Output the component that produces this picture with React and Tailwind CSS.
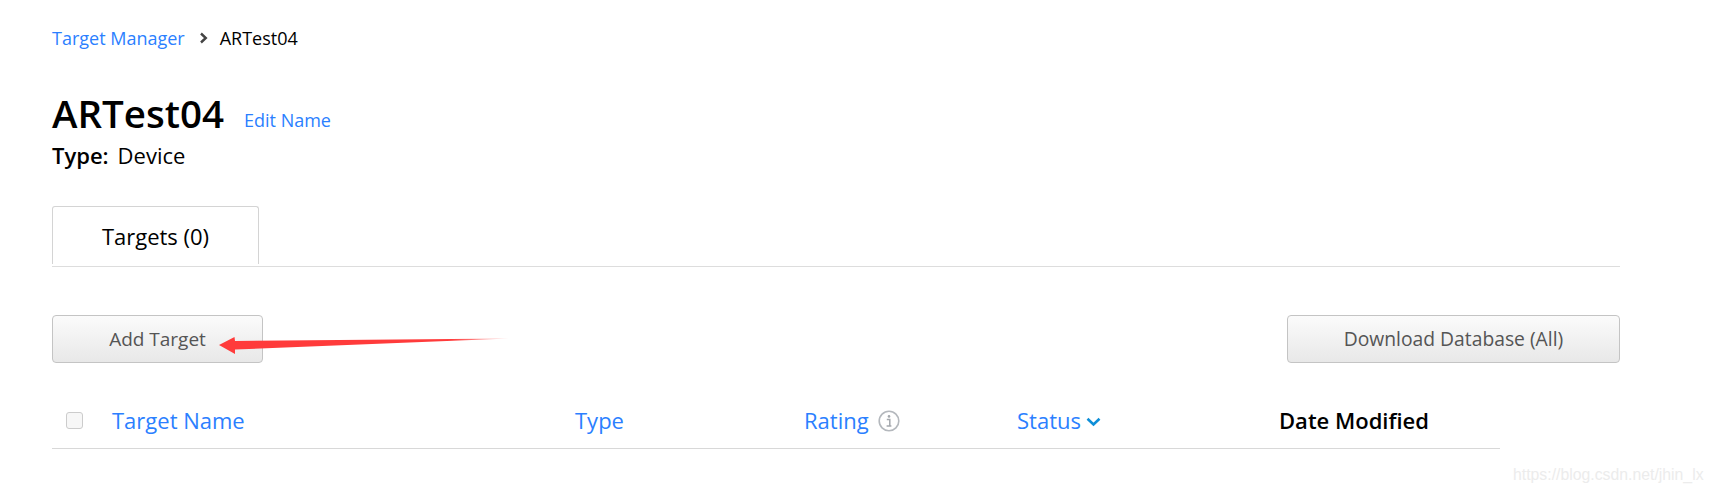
import React from "react";

const font = { fontFamily: '"Open Sans", sans-serif' };

function InfoIcon() {
  return (
    <svg width="22" height="22" viewBox="0 0 22 22" fill="none" className="ml-[9px]">
      <circle cx="11" cy="11" r="9.8" stroke="#b4b8bd" strokeWidth="1.6" />
      <circle cx="11" cy="6.4" r="1.3" fill="#a4a8ad" />
      <path d="M8.8 9.4h3v6.4M8.6 16h4.8" stroke="#a4a8ad" strokeWidth="1.5" />
    </svg>
  );
}

export default function App() {
  return (
    <div className="relative w-[1712px] h-[495px] bg-white overflow-hidden pl-[52px] pr-[92px]" style={font}>
      {/* Breadcrumb */}
      <div className="flex items-center h-[24px] mt-[26px] text-[18px] leading-[24px]">
        <a className="text-[#2b7fff]">Target Manager</a>
        <svg width="10" height="12" viewBox="0 0 10 12" className="ml-[14px] mr-[11px]">
          <path d="M2 1.5 6.8 6 2 10.5" fill="none" stroke="#444" strokeWidth="2.4" />
        </svg>
        <span className="text-black">ARTest04</span>
      </div>

      {/* Title */}
      <div className="flex items-baseline mt-[37px]">
        <h1 className="text-[38.5px] leading-[52px] font-semibold text-black">ARTest04</h1>
        <a className="ml-[20px] text-[18px] leading-[24px] text-[#2b7fff] relative -top-px">Edit Name</a>
      </div>
      <div className="flex text-[22px] leading-[28px] text-black mt-[2px]">
        <span className="font-semibold">Type:</span>
        <span className="ml-[9px]">Device</span>
      </div>

      {/* Tabs */}
      <div className="mt-[37px] h-[61px] border-b border-[#dddddd]">
        <div className="w-[207px] h-[58px] border border-b-0 border-[#d4d4d4] rounded-t-[3px] flex items-center justify-center text-[22px] text-black pt-[2px]">
          Targets (0)
        </div>
      </div>

      {/* Actions */}
      <div className="flex justify-between mt-[48px]">
        <button className="w-[211px] h-[48px] border border-[#c4c4c4] rounded-[4px] bg-gradient-to-b from-[#fbfbfb] to-[#e8e8e8] text-[19px] text-[#555555]">
          Add Target
        </button>
        <button className="w-[333px] h-[48px] border border-[#c4c4c4] rounded-[4px] bg-gradient-to-b from-[#fbfbfb] to-[#e8e8e8] text-[19.3px] text-[#555555]">
          Download Database (All)
        </button>
      </div>

      {/* Table header */}
      <div className="w-[1448px] h-[54px] mt-[32px] border-b border-[#d8d8d8] flex items-center text-[22px] text-[#2b7fff] pb-[2px]">
        <div className="w-[17px] h-[17px] ml-[14px] mr-[28px] border border-[#cccccc] rounded-[3px] bg-[#f7f7f7]" />
        <div className="w-[463px] ml-px">Target Name</div>
        <div className="w-[229px]">Type</div>
        <div className="w-[213px] flex items-center">Rating<InfoIcon /></div>
        <div className="w-[262px] flex items-center">
          Status
          <svg width="15" height="10" viewBox="0 0 15 10" className="ml-[5px] mt-[2px]">
            <path d="M1.5 1.8 7.5 7.5 13.5 1.8" fill="none" stroke="#0f8fd8" strokeWidth="2.6" />
          </svg>
        </div>
        <div className="font-semibold text-black">Date Modified</div>
      </div>

      {/* Annotation arrow */}
      <svg width="300" height="30" viewBox="0 0 300 30" className="absolute left-[215px] top-[330px]">
        <defs>
          <linearGradient id="fade" x1="0" x2="1" y1="0" y2="0">
            <stop offset="0.8" stopColor="#ff3b3b" />
            <stop offset="1" stopColor="#ff3b3b" stopOpacity="0.2" />
          </linearGradient>
        </defs>
        <path d="M4 15 19.5 7 20 11 294 8.5 20 19.5 20 24Z" fill="url(#fade)" />
      </svg>

      {/* Watermark */}
      <div className="absolute left-[1513px] top-[465px] text-[15.8px] leading-[20px] text-[#ececec]" style={{ fontFamily: '"Liberation Sans", sans-serif' }}>
        https://blog.csdn.net/jhin_lx
      </div>
    </div>
  );
}
